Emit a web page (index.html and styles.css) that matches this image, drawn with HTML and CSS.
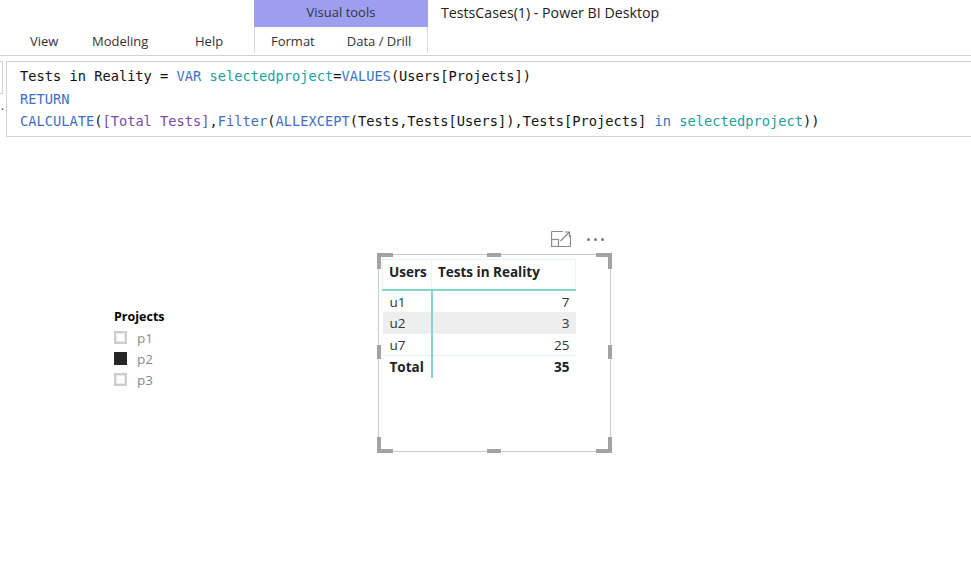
FILE: index.html
```html
<!DOCTYPE html>
<html>
<head>
<meta charset="utf-8">
<link rel="stylesheet" href="styles.css">
</head>
<body>
<header class="ribbon">
  <nav class="tabs">
    <span class="tab tab-view">View</span>
    <span class="tab tab-modeling">Modeling</span>
    <span class="tab tab-help">Help</span>
  </nav>
  <div class="context">
    <div class="context-title">Visual tools</div>
    <div class="context-tabs">
      <span class="tab">Format</span>
      <span class="tab">Data / Drill</span>
    </div>
  </div>
  <div class="app-title">TestsCases(1) - Power BI Desktop</div>
</header>

<section class="formula-row">
  <div class="formula-side"><span class="dot">.</span></div>
  <div class="formula">
    <div class="line">Tests in Reality = <span class="kw">VAR</span> <span class="var">selectedproject</span>=<span class="kw">VALUES</span>(Users[Projects])</div>
    <div class="line"><span class="kw">RETURN</span></div>
    <div class="line"><span class="kw">CALCULATE</span>(<span class="meas">[Total Tests]</span>,<span class="kw">Filter</span>(<span class="kw">ALLEXCEPT</span>(Tests,Tests[Users]),Tests[Projects] <span class="kw">in</span> <span class="var">selectedproject</span>))</div>
  </div>
</section>

<main class="canvas">
  <div class="slicer">
    <div class="slicer-title">Projects</div>
    <div class="slicer-item"><span class="box"></span><span class="lbl">p1</span></div>
    <div class="slicer-item"><span class="box checked"></span><span class="lbl">p2</span></div>
    <div class="slicer-item"><span class="box"></span><span class="lbl">p3</span></div>
  </div>

  <div class="visual">
    <div class="visual-header">
      <svg class="focus-icon" width="20" height="16" viewBox="0 0 20 16">
        <path d="M0.5 0.5 H12 M0.5 0.5 V15.5 H19.5 V4" fill="none" stroke="#8c8c8c" stroke-width="1.2"/>
        <rect x="0.5" y="8.5" width="7" height="7" fill="none" stroke="#8c8c8c" stroke-width="1.2"/>
        <path d="M9.5 10 L18.5 1 M13.5 1 H18.5 V6" fill="none" stroke="#8c8c8c" stroke-width="1.2"/>
      </svg>
      <span class="more"><i></i><i></i><i></i></span>
    </div>
    <div class="frame">
      <table class="grid">
        <thead>
          <tr><th class="c1">Users</th><th class="c2">Tests in Reality</th></tr>
        </thead>
        <tbody>
          <tr><td class="c1">u1</td><td class="c2 num">7</td></tr>
          <tr class="alt"><td class="c1">u2</td><td class="c2 num">3</td></tr>
          <tr><td class="c1">u7</td><td class="c2 num">25</td></tr>
          <tr class="total"><td class="c1">Total</td><td class="c2 num">35</td></tr>
        </tbody>
      </table>
      <span class="h corner tl"></span>
      <span class="h corner tr"></span>
      <span class="h corner bl"></span>
      <span class="h corner br"></span>
      <span class="h mid-t"></span>
      <span class="h mid-b"></span>
      <span class="h mid-l"></span>
      <span class="h mid-r"></span>
    </div>
  </div>
</main>
</body>
</html>
```
FILE: styles.css
```css
html, body {
  margin: 0;
  padding: 0;
  background: #ffffff;
}
body {
  font-family: "Open Sans", "Noto Sans", sans-serif;
  color: #333333;
  width: 971px;
  height: 570px;
  overflow: hidden;
}

/* Ribbon */
.ribbon {
  display: flex;
  height: 55px;
  border-bottom: 1px solid #d2d2d2;
  box-sizing: content-box;
}
.tabs {
  width: 254px;
  position: relative;
  font-size: 13px;
}
.tab {
  font-size: 13px;
  color: #333;
  white-space: nowrap;
}
.tabs .tab {
  position: absolute;
  top: 32px;
}
.tab-view { left: 30px; }
.tab-modeling { left: 92px; }
.tab-help { left: 195px; }

.context {
  width: 174px;
  display: flex;
  flex-direction: column;
}
.context-title {
  height: 27px;
  background: #9e9eef;
  text-align: center;
  font-size: 13px;
  line-height: 24px;
  color: #333;
}
.context-tabs {
  height: 21px;
  border-left: 1px solid #dadada;
  border-right: 1px solid #dadada;
  display: flex;
  gap: 32px;
  padding-left: 16px;
  padding-top: 5px;
}
.app-title {
  padding-left: 13px;
  padding-top: 3px;
  font-size: 14.2px;
  color: #222;
}

/* Formula bar */
.formula-row {
  display: flex;
  margin-top: 5px;
  height: 76px;
}
.formula-side {
  width: 2px;
  height: 31px;
  border-top: 1px solid #d2d2d2;
  border-right: 1px solid #d2d2d2;
  border-bottom: 1px solid #d2d2d2;
  position: relative;
  margin-right: 3px;
}
.dot {
  position: absolute;
  left: 1px;
  top: 38px;
  font-size: 12px;
  color: #333;
  line-height: 1;
}
.formula {
  flex: 1;
  border: 1px solid #d2d2d2;
  border-right: none;
  padding: 3px 0 0 13px;
  font-family: "DejaVu Sans Mono", "Liberation Mono", monospace;
  font-size: 13.7px;
  color: #111;
}
.line {
  height: 22.5px;
  line-height: 22.5px;
  white-space: pre;
}
.kw { color: #3f6fc6; }
.var { color: #1a9f9f; }
.meas { color: #7b4aae; }

/* Canvas */
.canvas {
  position: relative;
  height: 432px;
}

/* Slicer */
.slicer {
  position: absolute;
  left: 114px;
  top: 169px;
  display: flex;
  flex-direction: column;
}
.slicer-title {
  font-size: 12.5px;
  font-weight: 700;
  color: #000;
  height: 21px;
  line-height: 21px;
}
.slicer-item {
  display: flex;
  align-items: center;
  height: 21px;
  gap: 10px;
}
.box {
  width: 13px;
  height: 13px;
  box-sizing: border-box;
  border: 2px solid #cdcdcd;
  box-shadow: inset 0 0 0 1px #e8e8e8;
  background: #fff;
}
.box.checked {
  background: #252525;
  border-color: #252525;
  box-shadow: none;
}
.lbl {
  font-size: 13.5px;
  color: #8a8a8a;
}

/* Visual */
.visual {
  position: absolute;
  left: 377px;
  top: 94px;
  width: 234px;
}
.visual-header {
  height: 17px;
  display: flex;
  justify-content: flex-end;
  align-items: flex-start;
  gap: 16px;
  padding-right: 7px;
  margin-bottom: 6px;
}
.focus-icon {
  display: block;
}
.more {
  display: flex;
  gap: 4px;
  margin-top: 7px;
}
.more i {
  width: 3px;
  height: 3px;
  background: #7a7a7a;
  border-radius: 50%;
}
.frame {
  position: relative;
  margin-left: 1px;
  width: 233px;
  height: 198px;
  border: 1px solid #cbcbcb;
  box-sizing: border-box;
  padding: 4px 0 0 3px;
}
.grid {
  border-collapse: collapse;
  font-size: 13.5px;
  color: #333;
}
.grid th {
  font-weight: 700;
  color: #222;
  text-align: left;
  height: 30px;
  box-sizing: border-box;
  padding: 0 6px 5px 6px;
  line-height: 20px;
  border-top: 1px solid #e3f6f3;
  border-left: 1px solid #e3f6f3;
  border-right: 1px solid #e3f6f3;
  border-bottom: 2px solid #7ed9cc;
}
.grid th.c1 { padding-right: 3px; }
.grid th.c2 { padding-left: 6px; }
.grid tbody tr { height: 22px; }
.grid td {
  height: 22px;
  box-sizing: border-box;
  padding: 1px 6px 0 7px;
  line-height: 20px;
}
.grid td.c1 {
  padding-right: 3px;
  border-right: 2px solid #7ed9cc;
}
.c1 { width: 49px; }
.c2 { width: 144px; }
.grid tr.alt td { background: #eeeeee; }
.grid tr.total td {
  font-weight: 700;
  color: #222;
  border-top: 1px solid #e3f6f3;
}
.num { text-align: right; }

/* handles */
.h {
  position: absolute;
  background: transparent;
}
.corner {
  width: 12px;
  height: 12px;
}
.corner.tl { left: -2px; top: -2px; border-top: 4px solid #a3a3a3; border-left: 4px solid #a3a3a3; }
.corner.tr { right: -2px; top: -2px; border-top: 4px solid #a3a3a3; border-right: 4px solid #a3a3a3; }
.corner.bl { left: -2px; bottom: -2px; border-bottom: 4px solid #a3a3a3; border-left: 4px solid #a3a3a3; }
.corner.br { right: -2px; bottom: -2px; border-bottom: 4px solid #a3a3a3; border-right: 4px solid #a3a3a3; }
.mid-t, .mid-b {
  width: 14px;
  height: 4px;
  left: 108px;
  background: #a3a3a3;
}
.mid-t { top: -2px; }
.mid-b { bottom: -2px; }
.mid-l, .mid-r {
  width: 4px;
  height: 14px;
  top: 90px;
  background: #a3a3a3;
}
.mid-l { left: -2px; }
.mid-r { right: -2px; }
```
